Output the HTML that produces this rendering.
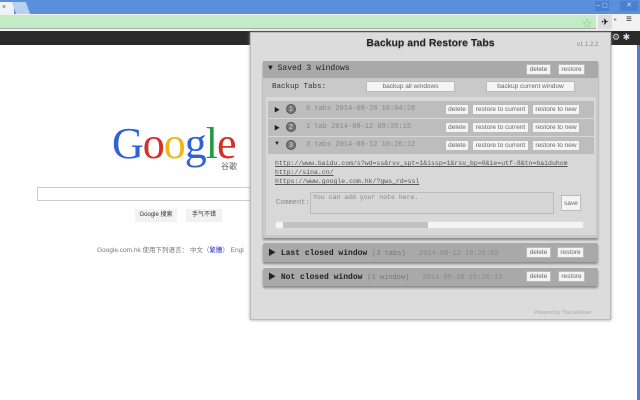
<!DOCTYPE html>
<html><head><meta charset="utf-8"><style>
*{margin:0;padding:0;box-sizing:border-box}
body{width:640px;height:400px;overflow:hidden;background:#fff;position:relative;font-family:"Liberation Sans","Noto Sans CJK SC",sans-serif}
.a{position:absolute}
.btn{position:absolute;background:#f4f4f4;border:1px solid #bbb;font-size:6.5px;color:#666;text-align:center;line-height:10px;height:11px;font-family:"Liberation Sans",sans-serif}
.mono{font-family:"Liberation Mono","Noto Sans CJK SC",monospace}
.sec{position:absolute;left:263px;width:335px;background:#a9a9a9;box-shadow:0 2px 2px #888;border-radius:2px}
.row{position:absolute;left:268px;width:326px;height:17px;background:#bdbdbd}
.num{position:absolute;width:10px;height:10px;border-radius:50%;background:#777;border:1px solid #555;color:#ddd;font-size:7px;line-height:9px;text-align:center}
.tri{font-size:8px;color:#222}
.gtxt{font-size:7px;color:#888}
</style></head><body>
<!-- title bar -->
<div class="a" style="left:0;top:0;width:640px;height:14px;background:#5a8fdc"></div>
<div class="a" style="left:0;top:2px;width:14px;height:12px;background:#eef3fb;font-size:7px;color:#555;line-height:12px;padding-left:2px">×</div>
<div class="a" style="left:14px;top:2px;width:14px;height:12px;background:#b9d1f1;transform:skewX(20deg)"></div>
<div class="a" style="left:595px;top:1px;width:14px;height:10px;background:#4c7fd0;color:#cde;font-size:7px;text-align:center">– ◻</div>
<div class="a" style="left:620px;top:1px;width:18px;height:10px;background:#4c7fd0;color:#cde;font-size:7px;text-align:center">✕</div>
<!-- toolbar -->
<div class="a" style="left:0;top:14px;width:640px;height:17px;background:#f2f2f2"></div>
<div class="a" style="left:0;top:15px;width:596px;height:14px;background:#c3ecc6;border-bottom:1px solid #aaa"></div>
<div class="a" style="left:582px;top:15px;font-size:10px;color:#7c7">☆</div>
<div class="a" style="left:598px;top:15px;width:14px;height:14px;background:#ddd;font-size:9px;text-align:center;line-height:14px">✈</div>
<div class="a" style="left:614px;top:16px;font-size:6px;color:#888">▸</div>
<div class="a" style="left:626px;top:14px;font-size:10px;color:#333">≡</div>
<!-- black bar -->
<div class="a" style="left:0;top:31px;width:640px;height:14px;background:#2a2a2a"></div>
<div class="a" style="left:612px;top:32px;font-size:9px;color:#ddd">⚙ ✱</div>
<div class="a" style="left:637px;top:45px;width:3px;height:355px;background:#4c7fd0"></div>
<!-- google -->
<div class="a" style="left:112px;top:119px;font-family:'Liberation Serif',serif;font-size:44px;letter-spacing:-1px;line-height:50px"><span style="color:#2e62d6">G</span><span style="color:#d43025">o</span><span style="color:#f1b815">o</span><span style="color:#2e62d6">g</span><span style="color:#1b9d3c">l</span><span style="color:#d43025">e</span></div>
<div class="a" style="left:221px;top:161px;font-size:8px;color:#555">谷歌</div>
<div class="a" style="left:37px;top:187px;width:215px;height:14px;border:1px solid #ccc;border-right:none"></div>
<div class="a" style="left:135px;top:209px;width:42px;height:13px;background:#f2f2f2;font-size:6px;line-height:13px;text-align:center;color:#333">Google 搜索</div>
<div class="a" style="left:186px;top:209px;width:36px;height:13px;background:#f2f2f2;font-size:6px;line-height:13px;text-align:center;color:#333">手气不错</div>
<div class="a" style="left:97px;top:244px;font-size:6.5px;color:#777;white-space:nowrap">Google.com.hk 使用下列语言： 中文（<span style="color:#33c">繁體</span>） Engl</div>
<!-- popup -->
<div class="a" style="left:250px;top:32px;width:361px;height:288px;background:#dcdcdc;border:1px solid #bbb;box-shadow:0 0 3px #999"></div>
<div class="a" style="left:250px;top:37px;width:361px;text-align:center;font-size:10.5px;font-weight:bold;color:#222;text-shadow:0 1px 1px #999">Backup and Restore Tabs</div>
<div class="a gtxt" style="left:577px;top:42px;font-size:6px">v1.1.2.2</div>
<!-- saved section -->
<div class="a" style="left:263px;top:61px;width:335px;height:177px;background:#c9c9c9;box-shadow:0 2px 2px #888"></div>
<div class="a" style="left:263px;top:61px;width:335px;height:17px;background:#a9a9a9"></div>
<div class="a mono" style="left:268px;top:64px;font-size:8px;color:#222"><span class="tri">▼</span> Saved 3 windows</div>
<div class="btn" style="left:526px;top:64px;width:25px">delete</div>
<div class="btn" style="left:558px;top:64px;width:27px">restore</div>
<div class="a mono" style="left:272px;top:83px;font-size:7.5px;color:#333">Backup Tabs:</div>
<div class="btn" style="left:366px;top:81px;width:89px">backup all windows</div>
<div class="btn" style="left:486px;top:81px;width:89px">backup current window</div>
<div class="a" style="left:266px;top:97px;width:330px;height:138px;background:#d8d8d8"></div>
<!-- rows -->
<div class="row" style="top:101px"></div>
<div class="row" style="top:119px"></div>
<div class="row" style="top:137px"></div>
<div class="a tri" style="left:274px;top:105px;font-size:6px">▶</div>
<div class="a tri" style="left:274px;top:123px;font-size:6px">▶</div>
<div class="a tri" style="left:274px;top:141px;font-size:6px">▼</div>
<div class="num" style="left:286px;top:104px">1</div>
<div class="num" style="left:286px;top:122px">2</div>
<div class="num" style="left:286px;top:140px">3</div>
<div class="a mono gtxt" style="left:306px;top:105px">6 tabs  2014-08-28 18:04:26</div>
<div class="a mono gtxt" style="left:306px;top:123px">1 tab  2014-08-12 09:35:15</div>
<div class="a mono gtxt" style="left:306px;top:141px">3 tabs  2014-08-12 10:26:12</div>
<div class="btn" style="left:445px;top:104px;width:24px">delete</div>
<div class="btn" style="left:472px;top:104px;width:57px">restore to current</div>
<div class="btn" style="left:532px;top:104px;width:48px">restore to new</div>
<div class="btn" style="left:445px;top:122px;width:24px">delete</div>
<div class="btn" style="left:472px;top:122px;width:57px">restore to current</div>
<div class="btn" style="left:532px;top:122px;width:48px">restore to new</div>
<div class="btn" style="left:445px;top:140px;width:24px">delete</div>
<div class="btn" style="left:472px;top:140px;width:57px">restore to current</div>
<div class="btn" style="left:532px;top:140px;width:48px">restore to new</div>
<div class="a mono" style="left:275px;top:159px;font-size:6.5px;color:#555;line-height:9px;text-decoration:underline;white-space:nowrap;width:310px;overflow:hidden">http://www.baidu.com/s?wd=ss&amp;rsv_spt=1&amp;issp=1&amp;rsv_bp=0&amp;ie=utf-8&amp;tn=baiduhom<br>http://sina.cn/<br>https://www.google.com.hk/?gws_rd=ssl</div>
<div class="a mono" style="left:276px;top:199px;font-size:7px;color:#888">Comment:</div>
<div class="a mono" style="left:310px;top:192px;width:244px;height:22px;border:1px solid #bbb;background:#d6d6d6;font-size:6.5px;color:#888;padding:1px 2px">You can add your note here.</div>
<div class="btn" style="left:561px;top:195px;width:20px;height:16px;line-height:15px">save</div>
<div class="a" style="left:275px;top:221px;width:309px;height:8px;background:#f4f4f4;border:1px solid #ddd"></div>
<div class="a" style="left:283px;top:222px;width:145px;height:6px;background:#c2c2c2"></div>
<!-- last closed -->
<div class="sec" style="top:243px;height:19px"></div>
<div class="a mono" style="left:268px;top:247px;font-size:8px;color:#222;white-space:nowrap"><span class="tri">▶</span> <b>Last closed window</b> <span style="color:#777;font-size:7px">(3 tabs)</span> <span style="color:#888;font-size:7px">&nbsp; 2014-08-12 10:26:02</span></div>
<div class="btn" style="left:526px;top:247px;width:25px">delete</div>
<div class="btn" style="left:557px;top:247px;width:27px">restore</div>
<!-- not closed -->
<div class="sec" style="top:268px;height:18px"></div>
<div class="a mono" style="left:268px;top:271px;font-size:8px;color:#222;white-space:nowrap"><span class="tri">▶</span> <b>Not closed window</b> <span style="color:#777;font-size:7px">(1 window)</span> <span style="color:#888;font-size:7px">&nbsp; 2014-08-18 15:26:13</span></div>
<div class="btn" style="left:526px;top:271px;width:25px">delete</div>
<div class="btn" style="left:558px;top:271px;width:27px">restore</div>
<div class="a" style="left:534px;top:310px;font-size:5px;color:#aaa">Powered by TheLastRiver</div>
</body></html>
